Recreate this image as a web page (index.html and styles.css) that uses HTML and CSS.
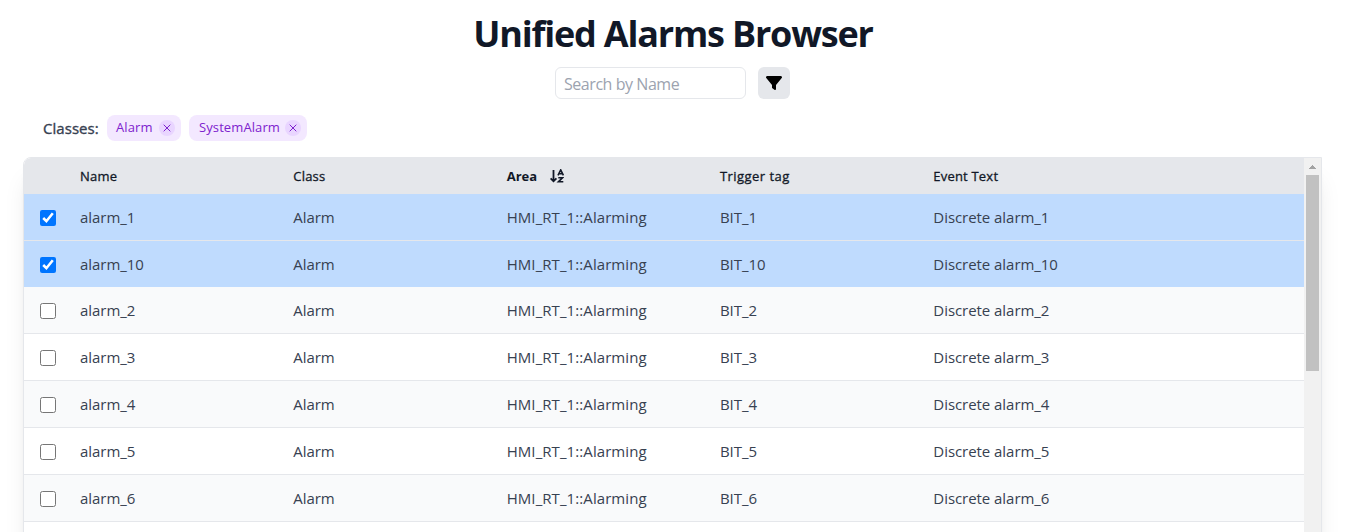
FILE: index.html
```html
<!DOCTYPE html>
<html lang="en">
<head>
<meta charset="utf-8">
<title>Unified Alarms Browser</title>
<link rel="stylesheet" href="styles.css">
</head>
<body>
<h1 class="title">Unified Alarms Browser</h1>
<div class="search-bar">
  <input class="search" type="text" placeholder="Search by Name">
  <button class="filter-btn" aria-label="Filter">
    <svg width="16" height="16" viewBox="0 0 512 512"><path d="M3.900 54.900C10.500 40.900 24.500 32 40 32H472c15.500 0 29.500 8.900 36.100 22.900s4.600 30.500-5.200 42.500L320 320.900V448c0 12.100-6.800 23.200-17.700 28.600s-23.800 4.300-33.500-3l-64-48c-8.100-6-12.800-15.500-12.800-25.600V320.900L9 97.300C-.7 85.400-2.800 68.800 3.900 54.900z"/></svg>
  </button>
</div>
<div class="classes">
  <span class="classes-label">Classes:</span>
  <span class="chip"><span class="chip-text">Alarm</span><span class="chip-x"><svg width="8" height="8" viewBox="0 0 8 8"><path d="M.7.7l6.600 6.600M7.300.7L.7 7.300"/></svg></span></span>
  <span class="chip"><span class="chip-text">SystemAlarm</span><span class="chip-x"><svg width="8" height="8" viewBox="0 0 8 8"><path d="M.7.7l6.600 6.600M7.300.7L.7 7.300"/></svg></span></span>
</div>
<div class="table-box">
  <div class="table">
    <div class="row head">
      <span></span><span>Name</span><span>Class</span>
      <span class="sorted"><span>Area</span><svg width="14" height="14" viewBox="0 0 14 14" fill="none" stroke="#111827" stroke-width="1.800"><path d="M3.500 1v11.300M.6 9.300l2.900 3 2.900-3"/><path d="M8 6.300L10.700.9l2.700 5.400M8.900 4.700h3.600M8.300 8.700h4.400l-4.200 4h4.800" stroke-width="1.600"/></svg></span>
      <span class="h-trigger">Trigger tag</span><span>Event Text</span>
    </div>
    <div class="row selected"><input type="checkbox" checked><span>alarm_1</span><span>Alarm</span><span class="area">HMI_RT_1::Alarming</span><span>BIT_1</span><span>Discrete alarm_1</span></div>
    <div class="row selected last-selected"><input type="checkbox" checked><span>alarm_10</span><span>Alarm</span><span class="area">HMI_RT_1::Alarming</span><span>BIT_10</span><span>Discrete alarm_10</span></div>
    <div class="row odd"><input type="checkbox"><span>alarm_2</span><span>Alarm</span><span class="area">HMI_RT_1::Alarming</span><span>BIT_2</span><span>Discrete alarm_2</span></div>
    <div class="row"><input type="checkbox"><span>alarm_3</span><span>Alarm</span><span class="area">HMI_RT_1::Alarming</span><span>BIT_3</span><span>Discrete alarm_3</span></div>
    <div class="row odd"><input type="checkbox"><span>alarm_4</span><span>Alarm</span><span class="area">HMI_RT_1::Alarming</span><span>BIT_4</span><span>Discrete alarm_4</span></div>
    <div class="row"><input type="checkbox"><span>alarm_5</span><span>Alarm</span><span class="area">HMI_RT_1::Alarming</span><span>BIT_5</span><span>Discrete alarm_5</span></div>
    <div class="row odd"><input type="checkbox"><span>alarm_6</span><span>Alarm</span><span class="area">HMI_RT_1::Alarming</span><span>BIT_6</span><span>Discrete alarm_6</span></div>
  </div>
  <div class="scrollbar">
    <svg class="arrow" width="7" height="4" viewBox="0 0 7 4" shape-rendering="crispEdges"><path d="M3 0h1v1h1v1h1v1h1v1H0V3h1V2h1V1h1z" fill="#a3a3a3"/></svg>
    <div class="thumb"></div>
  </div>
</div>
</body>
</html>
```
FILE: styles.css
```css
* { box-sizing: border-box; }
html { overflow: hidden; }
body {
  margin: 0;
  height: 532px;
  overflow: hidden;
  background: #fff;
  color: #374151;
  font-family: "Segoe UI", "Open Sans", "Noto Sans", sans-serif;
}
.title {
  margin: 0;
  height: 67px;
  padding-top: 14px;
  text-align: center;
  font-size: 36px;
  line-height: 40px;
  font-weight: 700;
  color: #111827;
  letter-spacing: -1.200px;
}
.search-bar {
  display: flex;
  justify-content: center;
  gap: 12px;
  padding-right: 1px;
}
.search {
  width: 191px;
  height: 32px;
  padding: 2px 8px 0;
  border: 1px solid #e5e7eb;
  border-radius: 6px;
  font: 16px "Segoe UI", "Open Sans", "Noto Sans", sans-serif;
  letter-spacing: -0.450px;
}
.search::placeholder { color: #9ca3af; }
.filter-btn {
  display: flex;
  align-items: center;
  justify-content: center;
  width: 32px;
  height: 32px;
  padding: 0;
  border: 0;
  border-radius: 6px;
  background: #e5e7eb;
}
.classes {
  display: flex;
  height: 26px;
  margin: 16px 0 0 43px;
  align-items: center;
  gap: 8px;
}
.classes-label {
  width: 56px;
  font-size: 15px;
  white-space: nowrap;
  letter-spacing: 0.050px;
  -webkit-text-stroke: 0.350px currentColor;
}
.chip {
  display: flex;
  align-items: center;
  justify-content: space-between;
  height: 26px;
  padding: 0 6px 0 9px;
  border-radius: 8px;
  background: #f3e8ff;
  color: #7e22ce;
  font-size: 13px;
  line-height: 26px;
  width: 74px;
}
.chip + .chip { width: 118px; padding-left: 10px; }
.chip-text { padding-bottom: 2px; line-height: 24px; letter-spacing: 0.100px; }
.chip-x {
  display: flex;
  align-items: center;
  justify-content: center;
  width: 16px;
  height: 16px;
  border-radius: 50%;
  background: #e9d5ff;
}
.chip-x svg { fill: none; stroke: #7e22ce; stroke-width: 1; }
.table-box {
  display: flex;
  width: 1299px;
  height: 440px;
  margin: 16px 0 0 23px;
  border: 1px solid #e5e7eb;
  border-radius: 8px 0 0 0;
  overflow: hidden;
  box-shadow: 0 20px 25px -5px rgba(0, 0, 0, .1), 0 8px 10px -6px rgba(0, 0, 0, .1);
}
.table { flex: 1; background: #fff; }
.row {
  display: grid;
  grid-template-columns: 40px 213.330px 213.330px 213.330px 213.330px 1fr;
  align-items: center;
  height: 47px;
  padding-left: 16px;
  border-bottom: 1px solid #e5e7eb;
  font-size: 15px;
  letter-spacing: -0.050px;
}
.area { letter-spacing: 0.080px; }
.row input { width: 16px; height: 16px; margin: 2px 0 0; }
.head {
  height: 36px;
  border: 0;
  background: #e5e7eb;
  color: #111827;
  font-size: 13px;
  letter-spacing: 0.200px;
  -webkit-text-stroke: 0.300px currentColor;
}
.h-trigger { letter-spacing: 0.450px; }
.selected { background: #bfdbfe; }
.last-selected { height: 46px; border: 0; }
.odd { background: #f9fafb; }
.sorted {
  display: flex;
  align-items: center;
  gap: 13px;
  font-weight: 700;
  letter-spacing: 0;
  -webkit-text-stroke: 0;
}
.scrollbar {
  width: 17px;
  padding: 7px 2px 0;
  background: #f1f1f1;
}
.arrow { display: block; margin: 0 auto; }
.thumb { height: 196px; margin-top: 6px; background: #c1c1c1; }
```
